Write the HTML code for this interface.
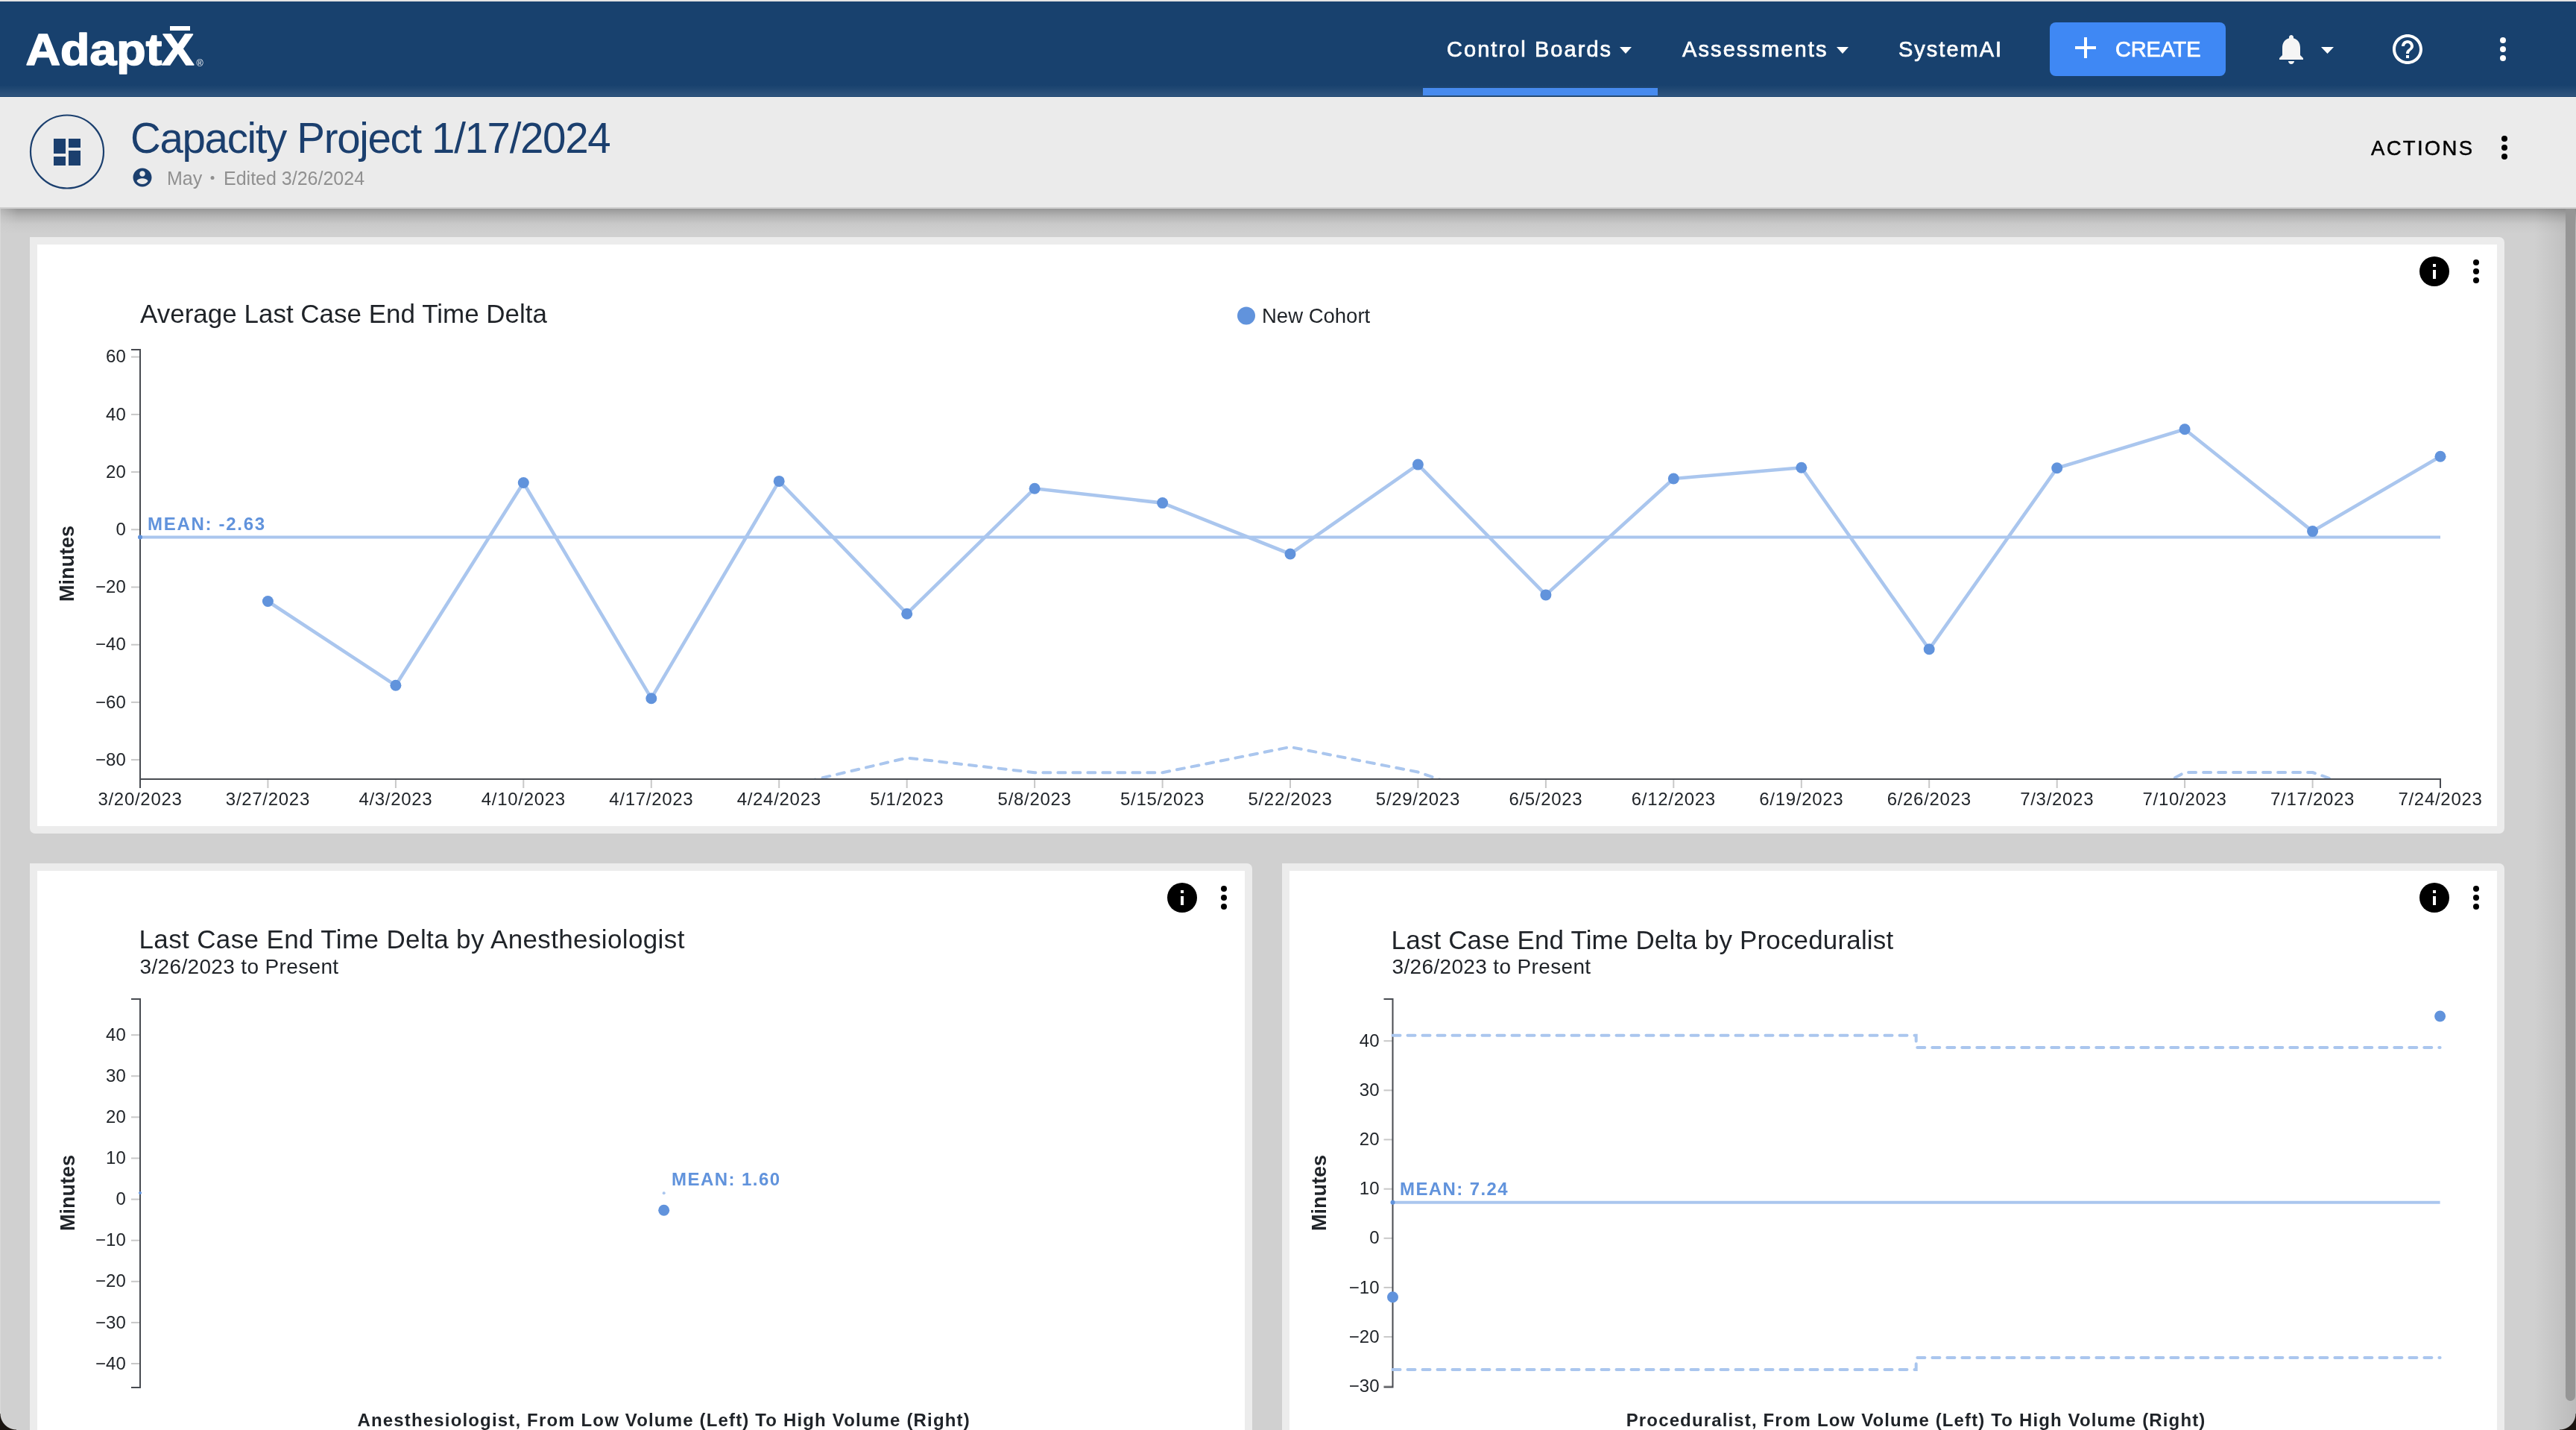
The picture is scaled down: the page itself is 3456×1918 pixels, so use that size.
<!DOCTYPE html>
<html><head><meta charset="utf-8"><title>Capacity Project</title>
<style>
html,body{margin:0;padding:0;}
body{width:3456px;height:1918px;overflow:hidden;position:relative;background:#d0d0d0;font-family:"Liberation Sans", sans-serif;}
.abs{position:absolute;}
#topline{left:0;top:0;width:3456px;height:2px;background:#e4e4e4;}
#nav{left:0;top:2px;width:3456px;height:128px;background:#18416e;}
#navshade{left:0;top:114px;width:3456px;height:15px;background:linear-gradient(to bottom, rgba(255,255,255,0) 0%, rgba(255,255,255,0.10) 100%);}
#underline{left:1909px;top:118px;width:315px;height:10px;background:#478bef;}
#create{left:2750px;top:30px;width:236px;height:72px;background:#3f88f4;border-radius:8px;}
#sub{left:0;top:130px;width:3456px;height:148px;background:#ebebeb;}
#subline{left:0;top:278px;width:3456px;height:2px;background:#cdcdcd;}
#subshadow{left:0;top:280px;width:3456px;height:34px;background:linear-gradient(to bottom, #979797 0%, #b5b5b5 30%, #c9c9c9 60%, #d0d0d0 100%);}
.card{background:#fff;border:10px solid #ececec;box-sizing:border-box;border-radius:0 7px 7px 7px;}
#c1{left:40px;top:318px;width:3320px;height:800px;}
#c2{left:40px;top:1158px;width:1640px;height:800px;}
#c3{left:1720px;top:1158px;width:1640px;height:800px;}
#scroll{left:3442px;top:280px;width:13px;height:1599px;background:#959595;border-radius:0 0 7px 7px;}
#rshade{left:3400px;top:280px;width:56px;height:1638px;background:linear-gradient(to right, rgba(0,0,0,0) 0%, rgba(0,0,0,0.10) 100%);}
svg text{font-family:"Liberation Sans", sans-serif;}
#lstrip{left:0;top:280px;width:1px;height:1638px;background:rgba(255,255,255,0.22);}
#lshade{left:0;top:280px;width:24px;height:34px;background:linear-gradient(to right, rgba(208,208,208,0.55), rgba(208,208,208,0));}
#corner-bl{left:0;top:1896px;width:22px;height:22px;background:radial-gradient(circle at 22px 0px, rgba(0,0,0,0) 21px, #1a1410 22px);}
#corner-br{left:3434px;top:1896px;width:22px;height:22px;background:radial-gradient(circle at 0px 0px, rgba(0,0,0,0) 21px, #1a1410 22px);}
</style></head>
<body>
<div class="abs" id="topline"></div>
<div class="abs" id="nav"></div>
<div class="abs" id="navshade"></div>
<div class="abs" id="underline"></div>
<div class="abs" id="create"></div>
<div class="abs" id="sub"></div>
<div class="abs" id="subline"></div>
<div class="abs" id="subshadow"></div>
<div class="abs" id="rshade"></div>
<div class="abs" id="scroll"></div>
<div class="abs card" id="c1"></div>
<div class="abs card" id="c2"></div>
<div class="abs card" id="c3"></div>
<div class="abs" id="lshade"></div>
<div class="abs" id="lstrip"></div>
<div class="abs" id="corner-bl"></div>
<div class="abs" id="corner-br"></div>
<svg class="abs" style="left:0;top:0;will-change:transform" width="3456" height="1918" viewBox="0 0 3456 1918">
<g transform="translate(34.5,87) scale(1.075,1)"><text x="0" y="0" font-size="60" font-weight="bold" fill="#fff" stroke="#fff" stroke-width="1.6" stroke-linejoin="round">AdaptX</text></g>
<rect x="228" y="35" width="27" height="6" fill="#fff"/>
<text x="263.5" y="89" font-size="12.5" fill="#fff">®</text>
<text x="1941" y="76" font-size="29" font-weight="normal" fill="#fff" text-anchor="start" letter-spacing="2.05" stroke="#fff" stroke-width="0.7">Control Boards</text>
<path d="M2173 63 L2189 63 L2181 72 Z" fill="#fff"/>
<text x="2257" y="76" font-size="29" font-weight="normal" fill="#fff" text-anchor="start" letter-spacing="2.1" stroke="#fff" stroke-width="0.7">Assessments</text>
<path d="M2464 63 L2480 63 L2472 72 Z" fill="#fff"/>
<text x="2547" y="76" font-size="29" font-weight="normal" fill="#fff" text-anchor="start" letter-spacing="2.0" stroke="#fff" stroke-width="0.7">SystemAI</text>
<rect x="2796" y="50" width="4" height="28" fill="#fff"/><rect x="2784" y="62" width="28" height="4" fill="#fff"/>
<text x="2838" y="76" font-size="29" font-weight="normal" fill="#fff" text-anchor="start" letter-spacing="-0.2" stroke="#fff" stroke-width="0.7">CREATE</text>
<g transform="translate(3050,42) scale(2)" fill="#f5f5f5"><path d="M12 22c1.1 0 2-.9 2-2h-4c0 1.1.89 2 2 2zm6-6v-5c0-3.07-1.64-5.64-4.5-6.32V4c0-.83-.67-1.5-1.5-1.5s-1.5.67-1.5 1.5v.68C7.63 5.36 6 7.92 6 11v5l-2 2v1h16v-1l-2-2z"/></g>
<path d="M3114 63 L3131 63 L3122.5 72 Z" fill="#fff"/>
<g transform="translate(3206,42) scale(2)" fill="#fff"><path d="M11 18h2v-2h-2v2zm1-16C6.48 2 2 6.48 2 12s4.48 10 10 10 10-4.48 10-10S17.52 2 12 2zm0 18c-4.41 0-8-3.59-8-8s3.59-8 8-8 8 3.59 8 8-3.59 8-8 8zm0-14c-2.21 0-4 1.79-4 4h2c0-1.1.9-2 2-2s2 .9 2 2c0 2-3 1.75-3 5h2c0-2.25 3-2.5 3-5 0-2.21-1.79-4-4-4z"/></g>
<circle cx="3358" cy="54" r="4" fill="#fff"/>
<circle cx="3358" cy="66" r="4" fill="#fff"/>
<circle cx="3358" cy="78" r="4" fill="#fff"/>
<circle cx="90" cy="203.5" r="49" fill="none" stroke="#1b3f6e" stroke-width="2.2"/>
<g fill="#1b3f6e"><rect x="72" y="186" width="16" height="20"/><rect x="92" y="186" width="16" height="12"/><rect x="72" y="210" width="16" height="12"/><rect x="92" y="202" width="16" height="20"/></g>
<text x="175" y="205" font-size="56.5" font-weight="normal" fill="#1b3f6e" text-anchor="start" letter-spacing="-1.35" >Capacity Project 1/17/2024</text>
<g transform="translate(176,223) scale(1.25)" fill="#1b3f6e"><path d="M12 2C6.48 2 2 6.48 2 12s4.48 10 10 10 10-4.48 10-10S17.52 2 12 2zm0 3c1.66 0 3 1.34 3 3s-1.34 3-3 3-3-1.34-3-3 1.34-3 3-3zm0 14.2c-2.5 0-4.71-1.28-6-3.22.03-1.99 4-3.08 6-3.08 1.99 0 5.97 1.09 6 3.08-1.29 1.94-3.5 3.22-6 3.22z"/></g>
<text x="224" y="248" font-size="25" font-weight="normal" fill="#909090" text-anchor="start" letter-spacing="0" >May</text>
<circle cx="285" cy="238.5" r="2.5" fill="#909090"/>
<text x="300" y="248" font-size="25" font-weight="normal" fill="#909090" text-anchor="start" letter-spacing="0" >Edited 3/26/2024</text>
<text x="3181" y="208" font-size="27.5" font-weight="normal" fill="#000" text-anchor="start" letter-spacing="2.3" stroke="#000" stroke-width="0.5">ACTIONS</text>
<circle cx="3360" cy="186" r="4" fill="#000"/>
<circle cx="3360" cy="198" r="4" fill="#000"/>
<circle cx="3360" cy="210" r="4" fill="#000"/>
<line x1="176" y1="1019.1" x2="188" y2="1019.1" stroke="#c8c8c8" stroke-width="2"/>
<text x="168.8" y="1026.7" font-size="24" font-weight="normal" fill="#1f2328" text-anchor="end" letter-spacing="0" >−80</text>
<line x1="176" y1="941.9" x2="188" y2="941.9" stroke="#c8c8c8" stroke-width="2"/>
<text x="168.8" y="949.5" font-size="24" font-weight="normal" fill="#1f2328" text-anchor="end" letter-spacing="0" >−60</text>
<line x1="176" y1="864.7" x2="188" y2="864.7" stroke="#c8c8c8" stroke-width="2"/>
<text x="168.8" y="872.3" font-size="24" font-weight="normal" fill="#1f2328" text-anchor="end" letter-spacing="0" >−40</text>
<line x1="176" y1="787.5" x2="188" y2="787.5" stroke="#c8c8c8" stroke-width="2"/>
<text x="168.8" y="795.1" font-size="24" font-weight="normal" fill="#1f2328" text-anchor="end" letter-spacing="0" >−20</text>
<line x1="176" y1="710.3" x2="188" y2="710.3" stroke="#c8c8c8" stroke-width="2"/>
<text x="168.8" y="717.9" font-size="24" font-weight="normal" fill="#1f2328" text-anchor="end" letter-spacing="0" >0</text>
<line x1="176" y1="633.1" x2="188" y2="633.1" stroke="#c8c8c8" stroke-width="2"/>
<text x="168.8" y="640.7" font-size="24" font-weight="normal" fill="#1f2328" text-anchor="end" letter-spacing="0" >20</text>
<line x1="176" y1="555.9" x2="188" y2="555.9" stroke="#c8c8c8" stroke-width="2"/>
<text x="168.8" y="563.5" font-size="24" font-weight="normal" fill="#1f2328" text-anchor="end" letter-spacing="0" >40</text>
<line x1="176" y1="478.7" x2="188" y2="478.7" stroke="#c8c8c8" stroke-width="2"/>
<text x="168.8" y="486.3" font-size="24" font-weight="normal" fill="#1f2328" text-anchor="end" letter-spacing="0" >60</text>
<text x="188.0" y="1079.8" font-size="24" font-weight="normal" fill="#1f2328" text-anchor="middle" letter-spacing="0.7" >3/20/2023</text>
<line x1="359.4" y1="1045" x2="359.4" y2="1057" stroke="#c8c8c8" stroke-width="2"/>
<text x="359.4" y="1079.8" font-size="24" font-weight="normal" fill="#1f2328" text-anchor="middle" letter-spacing="0.7" >3/27/2023</text>
<line x1="530.9" y1="1045" x2="530.9" y2="1057" stroke="#c8c8c8" stroke-width="2"/>
<text x="530.9" y="1079.8" font-size="24" font-weight="normal" fill="#1f2328" text-anchor="middle" letter-spacing="0.7" >4/3/2023</text>
<line x1="702.3" y1="1045" x2="702.3" y2="1057" stroke="#c8c8c8" stroke-width="2"/>
<text x="702.3" y="1079.8" font-size="24" font-weight="normal" fill="#1f2328" text-anchor="middle" letter-spacing="0.7" >4/10/2023</text>
<line x1="873.8" y1="1045" x2="873.8" y2="1057" stroke="#c8c8c8" stroke-width="2"/>
<text x="873.8" y="1079.8" font-size="24" font-weight="normal" fill="#1f2328" text-anchor="middle" letter-spacing="0.7" >4/17/2023</text>
<line x1="1045.2" y1="1045" x2="1045.2" y2="1057" stroke="#c8c8c8" stroke-width="2"/>
<text x="1045.2" y="1079.8" font-size="24" font-weight="normal" fill="#1f2328" text-anchor="middle" letter-spacing="0.7" >4/24/2023</text>
<line x1="1216.7" y1="1045" x2="1216.7" y2="1057" stroke="#c8c8c8" stroke-width="2"/>
<text x="1216.7" y="1079.8" font-size="24" font-weight="normal" fill="#1f2328" text-anchor="middle" letter-spacing="0.7" >5/1/2023</text>
<line x1="1388.1" y1="1045" x2="1388.1" y2="1057" stroke="#c8c8c8" stroke-width="2"/>
<text x="1388.1" y="1079.8" font-size="24" font-weight="normal" fill="#1f2328" text-anchor="middle" letter-spacing="0.7" >5/8/2023</text>
<line x1="1559.6" y1="1045" x2="1559.6" y2="1057" stroke="#c8c8c8" stroke-width="2"/>
<text x="1559.6" y="1079.8" font-size="24" font-weight="normal" fill="#1f2328" text-anchor="middle" letter-spacing="0.7" >5/15/2023</text>
<line x1="1731.0" y1="1045" x2="1731.0" y2="1057" stroke="#c8c8c8" stroke-width="2"/>
<text x="1731.0" y="1079.8" font-size="24" font-weight="normal" fill="#1f2328" text-anchor="middle" letter-spacing="0.7" >5/22/2023</text>
<line x1="1902.4" y1="1045" x2="1902.4" y2="1057" stroke="#c8c8c8" stroke-width="2"/>
<text x="1902.4" y="1079.8" font-size="24" font-weight="normal" fill="#1f2328" text-anchor="middle" letter-spacing="0.7" >5/29/2023</text>
<line x1="2073.9" y1="1045" x2="2073.9" y2="1057" stroke="#c8c8c8" stroke-width="2"/>
<text x="2073.9" y="1079.8" font-size="24" font-weight="normal" fill="#1f2328" text-anchor="middle" letter-spacing="0.7" >6/5/2023</text>
<line x1="2245.3" y1="1045" x2="2245.3" y2="1057" stroke="#c8c8c8" stroke-width="2"/>
<text x="2245.3" y="1079.8" font-size="24" font-weight="normal" fill="#1f2328" text-anchor="middle" letter-spacing="0.7" >6/12/2023</text>
<line x1="2416.8" y1="1045" x2="2416.8" y2="1057" stroke="#c8c8c8" stroke-width="2"/>
<text x="2416.8" y="1079.8" font-size="24" font-weight="normal" fill="#1f2328" text-anchor="middle" letter-spacing="0.7" >6/19/2023</text>
<line x1="2588.2" y1="1045" x2="2588.2" y2="1057" stroke="#c8c8c8" stroke-width="2"/>
<text x="2588.2" y="1079.8" font-size="24" font-weight="normal" fill="#1f2328" text-anchor="middle" letter-spacing="0.7" >6/26/2023</text>
<line x1="2759.7" y1="1045" x2="2759.7" y2="1057" stroke="#c8c8c8" stroke-width="2"/>
<text x="2759.7" y="1079.8" font-size="24" font-weight="normal" fill="#1f2328" text-anchor="middle" letter-spacing="0.7" >7/3/2023</text>
<line x1="2931.1" y1="1045" x2="2931.1" y2="1057" stroke="#c8c8c8" stroke-width="2"/>
<text x="2931.1" y="1079.8" font-size="24" font-weight="normal" fill="#1f2328" text-anchor="middle" letter-spacing="0.7" >7/10/2023</text>
<line x1="3102.6" y1="1045" x2="3102.6" y2="1057" stroke="#c8c8c8" stroke-width="2"/>
<text x="3102.6" y="1079.8" font-size="24" font-weight="normal" fill="#1f2328" text-anchor="middle" letter-spacing="0.7" >7/17/2023</text>
<text x="3274.0" y="1079.8" font-size="24" font-weight="normal" fill="#1f2328" text-anchor="middle" letter-spacing="0.7" >7/24/2023</text>
<path d="M176 469 H188 V1045 H3274 V1057 M188 1045 V1057" fill="none" stroke="#484b51" stroke-width="2"/>
<text x="99" y="756" font-size="27" font-weight="bold" fill="#1f2328" text-anchor="middle" letter-spacing="0" transform="rotate(-90 99 756)">Minutes</text>
<text x="188" y="432.6" font-size="35" font-weight="normal" fill="#1f2328" text-anchor="start" letter-spacing="0" >Average Last Case End Time Delta</text>
<circle cx="1672" cy="423.4" r="12" fill="#6193dc"/>
<text x="1693" y="433" font-size="27.5" font-weight="normal" fill="#1f2328" text-anchor="start" letter-spacing="0" >New Cohort</text>
<clipPath id="clipA"><rect x="188" y="460" width="3090" height="584"/></clipPath>
<polyline clip-path="url(#clipA)" points="1045.2,1057 1216.7,1016.5 1388.1,1036.2 1559.6,1036.2 1731.0,1001.9 1902.4,1035.5 2073.9,1094.8" fill="none" stroke="#aac6ee" stroke-width="4" stroke-dasharray="10 10" stroke-linecap="round" stroke-linejoin="round"/>
<polyline clip-path="url(#clipA)" points="2759.7,1129 2931.1,1036 3102.6,1036 3274.0,1096" fill="none" stroke="#aac6ee" stroke-width="4" stroke-dasharray="10 10" stroke-linecap="round" stroke-linejoin="round"/>
<line x1="188" y1="720.6" x2="3274" y2="720.6" stroke="#aac6ee" stroke-width="4"/><circle cx="188" cy="720.6" r="3" fill="#6193dc"/>
<text x="198" y="711" font-size="24" font-weight="bold" fill="#6193dc" text-anchor="start" letter-spacing="1.7" >MEAN: -2.63</text>
<polyline points="359.4,806.5 530.9,919.3 702.3,647.5 873.8,936.7 1045.2,645.4 1216.7,823.2 1388.1,655.2 1559.6,674.6 1731.0,743 1902.4,623.1 2073.9,797.9 2245.3,642 2416.8,627.2 2588.2,870.8 2759.7,627.8 2931.1,575.8 3102.6,712.6 3274.0,612.3" fill="none" stroke="#aac6ee" stroke-width="4.6" stroke-linejoin="round"/>
<circle cx="359.4" cy="806.5" r="7.5" fill="#6193dc"/>
<circle cx="530.9" cy="919.3" r="7.5" fill="#6193dc"/>
<circle cx="702.3" cy="647.5" r="7.5" fill="#6193dc"/>
<circle cx="873.8" cy="936.7" r="7.5" fill="#6193dc"/>
<circle cx="1045.2" cy="645.4" r="7.5" fill="#6193dc"/>
<circle cx="1216.7" cy="823.2" r="7.5" fill="#6193dc"/>
<circle cx="1388.1" cy="655.2" r="7.5" fill="#6193dc"/>
<circle cx="1559.6" cy="674.6" r="7.5" fill="#6193dc"/>
<circle cx="1731.0" cy="743" r="7.5" fill="#6193dc"/>
<circle cx="1902.4" cy="623.1" r="7.5" fill="#6193dc"/>
<circle cx="2073.9" cy="797.9" r="7.5" fill="#6193dc"/>
<circle cx="2245.3" cy="642" r="7.5" fill="#6193dc"/>
<circle cx="2416.8" cy="627.2" r="7.5" fill="#6193dc"/>
<circle cx="2588.2" cy="870.8" r="7.5" fill="#6193dc"/>
<circle cx="2759.7" cy="627.8" r="7.5" fill="#6193dc"/>
<circle cx="2931.1" cy="575.8" r="7.5" fill="#6193dc"/>
<circle cx="3102.6" cy="712.6" r="7.5" fill="#6193dc"/>
<circle cx="3274.0" cy="612.3" r="7.5" fill="#6193dc"/>
<circle cx="3266" cy="364" r="20" fill="#000"/>
<rect x="3264" y="354" width="4" height="4" fill="#fff"/>
<rect x="3264" y="362" width="4" height="12" fill="#fff"/>
<circle cx="3322" cy="352" r="4" fill="#000"/>
<circle cx="3322" cy="364" r="4" fill="#000"/>
<circle cx="3322" cy="376" r="4" fill="#000"/>
<line x1="176" y1="1829.0" x2="188" y2="1829.0" stroke="#c8c8c8" stroke-width="2"/>
<text x="168.8" y="1836.6" font-size="24" font-weight="normal" fill="#1f2328" text-anchor="end" letter-spacing="0" >−40</text>
<line x1="176" y1="1773.9" x2="188" y2="1773.9" stroke="#c8c8c8" stroke-width="2"/>
<text x="168.8" y="1781.5" font-size="24" font-weight="normal" fill="#1f2328" text-anchor="end" letter-spacing="0" >−30</text>
<line x1="176" y1="1718.8" x2="188" y2="1718.8" stroke="#c8c8c8" stroke-width="2"/>
<text x="168.8" y="1726.4" font-size="24" font-weight="normal" fill="#1f2328" text-anchor="end" letter-spacing="0" >−20</text>
<line x1="176" y1="1663.7" x2="188" y2="1663.7" stroke="#c8c8c8" stroke-width="2"/>
<text x="168.8" y="1671.3" font-size="24" font-weight="normal" fill="#1f2328" text-anchor="end" letter-spacing="0" >−10</text>
<line x1="176" y1="1608.6" x2="188" y2="1608.6" stroke="#c8c8c8" stroke-width="2"/>
<text x="168.8" y="1616.2" font-size="24" font-weight="normal" fill="#1f2328" text-anchor="end" letter-spacing="0" >0</text>
<line x1="176" y1="1553.5" x2="188" y2="1553.5" stroke="#c8c8c8" stroke-width="2"/>
<text x="168.8" y="1561.1" font-size="24" font-weight="normal" fill="#1f2328" text-anchor="end" letter-spacing="0" >10</text>
<line x1="176" y1="1498.4" x2="188" y2="1498.4" stroke="#c8c8c8" stroke-width="2"/>
<text x="168.8" y="1506.0" font-size="24" font-weight="normal" fill="#1f2328" text-anchor="end" letter-spacing="0" >20</text>
<line x1="176" y1="1443.3" x2="188" y2="1443.3" stroke="#c8c8c8" stroke-width="2"/>
<text x="168.8" y="1450.9" font-size="24" font-weight="normal" fill="#1f2328" text-anchor="end" letter-spacing="0" >30</text>
<line x1="176" y1="1388.2" x2="188" y2="1388.2" stroke="#c8c8c8" stroke-width="2"/>
<text x="168.8" y="1395.8" font-size="24" font-weight="normal" fill="#1f2328" text-anchor="end" letter-spacing="0" >40</text>
<path d="M176 1340 H188 V1861 H176" fill="none" stroke="#484b51" stroke-width="2"/>
<text x="99.5" y="1600" font-size="27" font-weight="bold" fill="#1f2328" text-anchor="middle" letter-spacing="0" transform="rotate(-90 99.5 1600)">Minutes</text>
<text x="186.5" y="1272" font-size="35" font-weight="normal" fill="#1f2328" text-anchor="start" letter-spacing="0.37" >Last Case End Time Delta by Anesthesiologist</text>
<text x="187.5" y="1305.7" font-size="28" font-weight="normal" fill="#1f2328" text-anchor="start" letter-spacing="0.35" >3/26/2023 to Present</text>
<circle cx="188" cy="1600" r="2" fill="#6193dc"/>
<circle cx="890.7" cy="1600.2" r="2" fill="#aac6ee"/>
<circle cx="890.7" cy="1623.3" r="7.5" fill="#6193dc"/>
<text x="901" y="1590" font-size="24" font-weight="bold" fill="#6193dc" text-anchor="start" letter-spacing="1.45" >MEAN: 1.60</text>
<text x="890.7" y="1912.5" font-size="24" font-weight="bold" fill="#1f2328" text-anchor="middle" letter-spacing="1.16" >Anesthesiologist, From Low Volume (Left) To High Volume (Right)</text>
<circle cx="1586" cy="1204" r="20" fill="#000"/>
<rect x="1584" y="1194" width="4" height="4" fill="#fff"/>
<rect x="1584" y="1202" width="4" height="12" fill="#fff"/>
<circle cx="1642" cy="1192" r="4" fill="#000"/>
<circle cx="1642" cy="1204" r="4" fill="#000"/>
<circle cx="1642" cy="1216" r="4" fill="#000"/>
<line x1="1856.5" y1="1859.2" x2="1868.5" y2="1859.2" stroke="#c8c8c8" stroke-width="2"/>
<text x="1850.5" y="1866.8" font-size="24" font-weight="normal" fill="#1f2328" text-anchor="end" letter-spacing="0" >−30</text>
<line x1="1856.5" y1="1793.1" x2="1868.5" y2="1793.1" stroke="#c8c8c8" stroke-width="2"/>
<text x="1850.5" y="1800.7" font-size="24" font-weight="normal" fill="#1f2328" text-anchor="end" letter-spacing="0" >−20</text>
<line x1="1856.5" y1="1726.9" x2="1868.5" y2="1726.9" stroke="#c8c8c8" stroke-width="2"/>
<text x="1850.5" y="1734.5" font-size="24" font-weight="normal" fill="#1f2328" text-anchor="end" letter-spacing="0" >−10</text>
<line x1="1856.5" y1="1660.8" x2="1868.5" y2="1660.8" stroke="#c8c8c8" stroke-width="2"/>
<text x="1850.5" y="1668.4" font-size="24" font-weight="normal" fill="#1f2328" text-anchor="end" letter-spacing="0" >0</text>
<line x1="1856.5" y1="1594.7" x2="1868.5" y2="1594.7" stroke="#c8c8c8" stroke-width="2"/>
<text x="1850.5" y="1602.3" font-size="24" font-weight="normal" fill="#1f2328" text-anchor="end" letter-spacing="0" >10</text>
<line x1="1856.5" y1="1528.5" x2="1868.5" y2="1528.5" stroke="#c8c8c8" stroke-width="2"/>
<text x="1850.5" y="1536.1" font-size="24" font-weight="normal" fill="#1f2328" text-anchor="end" letter-spacing="0" >20</text>
<line x1="1856.5" y1="1462.4" x2="1868.5" y2="1462.4" stroke="#c8c8c8" stroke-width="2"/>
<text x="1850.5" y="1470.0" font-size="24" font-weight="normal" fill="#1f2328" text-anchor="end" letter-spacing="0" >30</text>
<line x1="1856.5" y1="1396.2" x2="1868.5" y2="1396.2" stroke="#c8c8c8" stroke-width="2"/>
<text x="1850.5" y="1403.8" font-size="24" font-weight="normal" fill="#1f2328" text-anchor="end" letter-spacing="0" >40</text>
<path d="M1856.5 1340 H1868.5 V1860.6 H1856.5" fill="none" stroke="#484b51" stroke-width="2"/>
<text x="1779" y="1600" font-size="27" font-weight="bold" fill="#1f2328" text-anchor="middle" letter-spacing="0" transform="rotate(-90 1779 1600)">Minutes</text>
<text x="1866.5" y="1272.5" font-size="35" font-weight="normal" fill="#1f2328" text-anchor="start" letter-spacing="0.16" >Last Case End Time Delta by Proceduralist</text>
<text x="1867.5" y="1305.7" font-size="28" font-weight="normal" fill="#1f2328" text-anchor="start" letter-spacing="0.35" >3/26/2023 to Present</text>
<path d="M1868.5 1388.8 H2570.7 V1405 H3273.6" fill="none" stroke="#aac6ee" stroke-width="4" stroke-dasharray="10 10" stroke-linecap="round"/>
<path d="M1868.5 1837.1 H2570.7 V1821 H3273.6" fill="none" stroke="#aac6ee" stroke-width="4" stroke-dasharray="10 10" stroke-linecap="round"/>
<line x1="1868.5" y1="1612.8" x2="3273.6" y2="1612.8" stroke="#aac6ee" stroke-width="4"/><circle cx="1868.5" cy="1612.8" r="3" fill="#6193dc"/>
<text x="1878" y="1603" font-size="24" font-weight="bold" fill="#6193dc" text-anchor="start" letter-spacing="1.4" >MEAN: 7.24</text>
<circle cx="1868.5" cy="1739.7" r="7.5" fill="#6193dc"/>
<circle cx="3273.6" cy="1363" r="7.5" fill="#6193dc"/>
<text x="2570.6" y="1912.5" font-size="24" font-weight="bold" fill="#1f2328" text-anchor="middle" letter-spacing="1.14" >Proceduralist, From Low Volume (Left) To High Volume (Right)</text>
<circle cx="3266" cy="1204" r="20" fill="#000"/>
<rect x="3264" y="1194" width="4" height="4" fill="#fff"/>
<rect x="3264" y="1202" width="4" height="12" fill="#fff"/>
<circle cx="3322" cy="1192" r="4" fill="#000"/>
<circle cx="3322" cy="1204" r="4" fill="#000"/>
<circle cx="3322" cy="1216" r="4" fill="#000"/>
</svg>
</body></html>
